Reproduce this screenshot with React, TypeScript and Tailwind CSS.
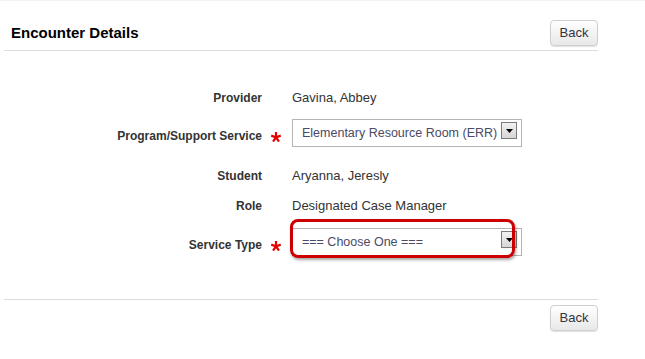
import React from "react";

function Star() {
  return (
    <svg width="10" height="10" viewBox="0 0 10 10" className="block">
      <g stroke="#e60000" strokeWidth="2.2" strokeLinecap="butt">
        <line x1="5" y1="5.4" x2="5" y2="0" />
        <line x1="5" y1="5.4" x2="0.2" y2="3.6" />
        <line x1="5" y1="5.4" x2="9.8" y2="3.6" />
        <line x1="5" y1="5.4" x2="2" y2="9.6" />
        <line x1="5" y1="5.4" x2="8" y2="9.6" />
      </g>
    </svg>
  );
}

function BackButton() {
  return (
    <button className="w-[48px] h-[26px] rounded-[4px] border border-[#cfcfcf] bg-gradient-to-b from-white to-[#e8e8e8] text-[13px] text-[#333340] shadow-[0_1px_1px_rgba(0,0,0,0.12)] flex items-center justify-center">
      Back
    </button>
  );
}

function Select({ text }: { text: string }) {
  return (
    <div className="w-[230px] h-[28px] border border-[#b4b4b4] bg-white flex items-center pl-[9px] pr-[4px]">
      <span className="flex-1 min-w-0 overflow-hidden text-[12.5px] text-[#4a4a66] whitespace-nowrap">{text}</span>
      <div className="shrink-0 w-[16px] h-[17px] border border-[#7a7a7a] bg-gradient-to-b from-[#f2f2f2] to-[#d6d6d6] flex items-center justify-center mb-[5px]">
        <svg width="7" height="4" viewBox="0 0 7 4">
          <polygon points="0,0 7,0 3.5,4" fill="#000" />
        </svg>
      </div>
    </div>
  );
}

function Label({ children, offset }: { children: React.ReactNode; offset?: boolean }) {
  return (
    <div className={`w-[258px] text-right text-[12px] font-bold text-[#333] ${offset ? "mt-[6px]" : ""}`}>
      {children}
    </div>
  );
}

export default function App() {
  return (
    <div
      className="w-[645px] h-[359px] bg-white border-t border-[#f2f2f2] overflow-hidden"
      style={{ fontFamily: '"Liberation Sans", Arial, sans-serif' }}
    >
      <div className="ml-[4px] w-[594px]">
        <div className="flex items-center justify-between pt-[18px] pb-[4px] border-b border-[#dcdcdc] h-[50px]">
          <div className="pl-[7px] pt-[2px] text-[15px] font-bold text-black">Encounter Details</div>
          <BackButton />
        </div>

        <div className="flex flex-col">
          <div className="flex items-center h-[20px] mt-[37px]">
            <Label>Provider</Label>
            <div className="w-[30px]" />
            <div className="text-[13px] text-[#333]">Gavina, Abbey</div>
          </div>

          <div className="flex items-center h-[28px] mt-[11px]">
            <Label offset>Program/Support Service</Label>
            <div className="w-[30px] pl-[9px] mt-[8px]">
              <Star />
            </div>
            <Select text="Elementary Resource Room (ERR)" />
          </div>

          <div className="flex items-center h-[20px] mt-[19px]">
            <Label>Student</Label>
            <div className="w-[30px]" />
            <div className="text-[13px] text-[#333]">Aryanna, Jeresly</div>
          </div>

          <div className="flex items-center h-[20px] mt-[10px]">
            <Label>Role</Label>
            <div className="w-[30px]" />
            <div className="text-[13px] text-[#333]">Designated Case Manager</div>
          </div>

          <div className="flex items-center h-[28px] mt-[12px]">
            <Label offset>Service Type</Label>
            <div className="w-[30px] pl-[9px] mt-[8px]">
              <Star />
            </div>
            <div className="relative">
              <Select text="=== Choose One ===" />
              <div className="absolute left-[-2px] top-[-9px] w-[225px] h-[39px] rounded-[8px] border-[3px] border-[#cc0000] shadow-[1px_2px_3px_rgba(0,0,0,0.35)] pointer-events-none" />
            </div>
          </div>
        </div>

        <div className="mt-[43px] border-t border-[#dcdcdc] pt-[5px] flex justify-end">
          <BackButton />
        </div>
      </div>
    </div>
  );
}
